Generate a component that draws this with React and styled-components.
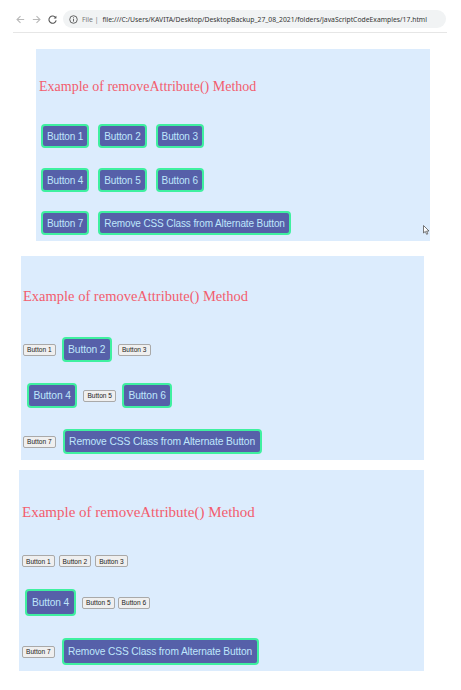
import React from "react";
import styled, { createGlobalStyle } from "styled-components";

const GlobalStyle = createGlobalStyle`
  html, body {
    margin: 0;
    padding: 0;
    background: #ffffff;
  }
  body {
    width: 461px;
    height: 690px;
    overflow: hidden;
    font-family: "Liberation Sans", Arial, sans-serif;
  }
`;

const Page = styled.div`
  position: relative;
  width: 461px;
  height: 690px;
`;

const BrowserBar = styled.div`
  display: flex;
  align-items: center;
  gap: 5px;
  height: 20px;
  padding: 9px 15px 0 15px;
`;

const NavIcon = styled.svg`
  width: 11px;
  height: 11px;
  flex: none;
`;

const Omnibox = styled.div`
  display: flex;
  align-items: center;
  gap: 4px;
  flex: 1;
  height: 18px;
  padding: 0 6px;
  background: #f1f3f4;
  border-radius: 9px;
  font-family: "Noto Sans", "Liberation Sans", sans-serif;
  font-size: 6.8px;
  color: #333;
  white-space: nowrap;
  overflow: hidden;
`;

const Scheme = styled.span`
  color: #777;
`;

const Divider = styled.div`
  height: 1px;
  background: #e6e6e6;
  margin: 3px 14px 0 13px;
`;

const Panel = styled.section`
  box-sizing: border-box;
  width: ${(p) => p.$w}px;
  height: ${(p) => p.$h}px;
  margin: ${(p) => p.$mt}px 0 0 ${(p) => p.$ml}px;
  padding: ${(p) => p.$pt}px 0 0 ${(p) => p.$pl}px;
  background: #dcecfd;
`;

const Title = styled.h2`
  margin: 0 0 0 ${(p) => p.$ml || 0}px;
  font-family: "Liberation Serif", "Times New Roman", serif;
  font-weight: normal;
  font-size: ${(p) => p.$fs}px;
  line-height: 16px;
  color: #f35d6e;
`;

const Row = styled.div`
  display: flex;
  align-items: center;
  gap: ${(p) => p.$gap}px;
  height: ${(p) => p.$h}px;
  margin-top: ${(p) => p.$mt}px;
`;

const FancyButton = styled.button`
  box-sizing: border-box;
  height: ${(p) => p.$h}px;
  margin: 0 ${(p) => p.$m}px;
  padding: 0 ${(p) => p.$px}px;
  background: #5660a9;
  color: #bfe6fb;
  border: 2px solid #3ff0a0;
  border-radius: 4px;
  font-family: "Liberation Sans", Arial, sans-serif;
  font-size: ${(p) => p.$fs}px;
  letter-spacing: -0.12px;
  white-space: nowrap;
  cursor: pointer;
`;

const PlainButton = styled.button`
  box-sizing: border-box;
  height: 12px;
  padding: 0 3px;
  background: #efefef;
  color: #222;
  border: 1px solid #a9a9a9;
  border-radius: 2px;
  font-family: "Liberation Sans", Arial, sans-serif;
  font-size: 6.6px;
  white-space: nowrap;
`;

const Cursor = styled.svg`
  position: absolute;
  left: 423px;
  top: 225px;
  width: 7px;
  height: 10px;
`;

const TITLE = "Example of removeAttribute() Method";
const REMOVE = "Remove CSS Class from Alternate Button";

function BackArrow({ color }) {
  return (
    <NavIcon viewBox="0 0 12 12">
      <path d="M10 6H2.5M6 2.2L2.2 6 6 9.8" stroke={color} strokeWidth="1.2" fill="none" />
    </NavIcon>
  );
}

function ForwardArrow({ color }) {
  return (
    <NavIcon viewBox="0 0 12 12">
      <path d="M2 6h7.5M6 2.2L9.8 6 6 9.8" stroke={color} strokeWidth="1.2" fill="none" />
    </NavIcon>
  );
}

function Reload() {
  return (
    <NavIcon viewBox="0 0 12 12">
      <path d="M9.6 4.2A4 4 0 1 0 10 7" stroke="#555" strokeWidth="1.2" fill="none" />
      <path d="M10.2 1.8v3H7.2z" fill="#555" />
    </NavIcon>
  );
}

function InfoIcon() {
  return (
    <svg width="9" height="9" viewBox="0 0 10 10">
      <circle cx="5" cy="5" r="4.2" stroke="#555" strokeWidth="1" fill="none" />
      <rect x="4.5" y="4.3" width="1" height="3" fill="#555" />
      <rect x="4.5" y="2.6" width="1" height="1" fill="#555" />
    </svg>
  );
}

export default function App() {
  return (
    <Page>
      <GlobalStyle />
      <BrowserBar>
        <BackArrow color="#b9b9b9" />
        <ForwardArrow color="#b9b9b9" />
        <Reload />
        <Omnibox>
          <InfoIcon />
          <Scheme>File |</Scheme>
          <span>file:///C:/Users/KAVITA/Desktop/DesktopBackup_27_08_2021/folders/JavaScriptCodeExamples/17.html</span>
        </Omnibox>
      </BrowserBar>
      <Divider />

      {/* first state: every button styled */}
      <Panel $w={394} $h={192} $mt={16} $ml={36} $pt={30} $pl={5}>
        <Title $fs={14} $ml={-2}>{TITLE}</Title>
        <Row $gap={9} $h={24} $mt={29}>
          <FancyButton $h={24} $m={0} $px={4} $fs={10}>Button 1</FancyButton>
          <FancyButton $h={24} $m={0} $px={4} $fs={10}>Button 2</FancyButton>
          <FancyButton $h={24} $m={0} $px={4} $fs={10}>Button 3</FancyButton>
        </Row>
        <Row $gap={9} $h={24} $mt={20}>
          <FancyButton $h={24} $m={0} $px={4} $fs={10}>Button 4</FancyButton>
          <FancyButton $h={24} $m={0} $px={4} $fs={10}>Button 5</FancyButton>
          <FancyButton $h={24} $m={0} $px={4} $fs={10}>Button 6</FancyButton>
        </Row>
        <Row $gap={9} $h={24} $mt={19}>
          <FancyButton $h={24} $m={0} $px={4} $fs={10}>Button 7</FancyButton>
          <FancyButton $h={24} $m={0} $px={4} $fs={10}>{REMOVE}</FancyButton>
        </Row>
      </Panel>

      {/* second state: alternate classes removed */}
      <Panel $w={403} $h={204} $mt={15} $ml={21} $pt={32} $pl={2}>
        <Title $fs={14.5}>{TITLE}</Title>
        <Row $gap={2} $h={25} $mt={33}>
          <PlainButton>Button 1</PlainButton>
          <FancyButton $h={25} $m={4} $px={4.5} $fs={10.3}>Button 2</FancyButton>
          <PlainButton>Button 3</PlainButton>
        </Row>
        <Row $gap={2} $h={25} $mt={21}>
          <FancyButton $h={25} $m={4} $px={4.5} $fs={10.3}>Button 4</FancyButton>
          <PlainButton>Button 5</PlainButton>
          <FancyButton $h={25} $m={4} $px={4.5} $fs={10.3}>Button 6</FancyButton>
        </Row>
        <Row $gap={3} $h={25} $mt={21}>
          <PlainButton>Button 7</PlainButton>
          <FancyButton $h={25} $m={4} $px={4.5} $fs={10.3}>{REMOVE}</FancyButton>
        </Row>
      </Panel>

      {/* third state */}
      <Panel $w={405} $h={201} $mt={10} $ml={19} $pt={34} $pl={3}>
        <Title $fs={15}>{TITLE}</Title>
        <Row $gap={4} $h={12} $mt={35}>
          <PlainButton>Button 1</PlainButton>
          <PlainButton>Button 2</PlainButton>
          <PlainButton>Button 3</PlainButton>
        </Row>
        <Row $gap={3} $h={27} $mt={22}>
          <FancyButton $h={27} $m={3} $px={5} $fs={10.2}>Button 4</FancyButton>
          <PlainButton>Button 5</PlainButton>
          <PlainButton>Button 6</PlainButton>
        </Row>
        <Row $gap={4} $h={27} $mt={22}>
          <PlainButton>Button 7</PlainButton>
          <FancyButton $h={27} $m={3} $px={4.5} $fs={10.2}>{REMOVE}</FancyButton>
        </Row>
      </Panel>

      <Cursor viewBox="0 0 7 10">
        <path d="M0.5 0.5V8L2.3 6.4 3.6 9.3 4.8 8.8 3.6 6H6z" fill="#fff" stroke="#555" strokeWidth="0.8" />
      </Cursor>
    </Page>
  );
}
